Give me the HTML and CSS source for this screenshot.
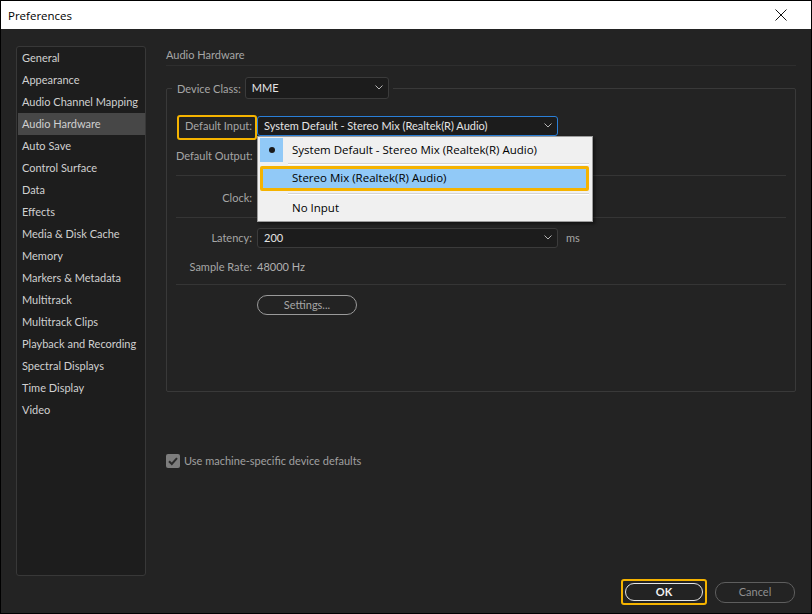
FILE: index.html
```html
<!DOCTYPE html>
<html>
<head>
<meta charset="utf-8">
<title>Preferences</title>
<link rel="stylesheet" href="styles.css">
</head>
<body>
<div class="window">
  <div class="titlebar">
    <span class="title">Preferences</span>
    <svg class="close" width="12" height="12" viewBox="0 0 12 12"><path d="M0.5 0.5 L11.5 11.5 M11.5 0.5 L0.5 11.5" stroke="#111" stroke-width="1" fill="none"/></svg>
  </div>
  <div class="body">
    <div class="content">
      <nav class="sidebar">
        <div class="nav-item">General</div>
        <div class="nav-item">Appearance</div>
        <div class="nav-item">Audio Channel Mapping</div>
        <div class="nav-item active">Audio Hardware</div>
        <div class="nav-item">Auto Save</div>
        <div class="nav-item">Control Surface</div>
        <div class="nav-item">Data</div>
        <div class="nav-item">Effects</div>
        <div class="nav-item">Media &amp; Disk Cache</div>
        <div class="nav-item">Memory</div>
        <div class="nav-item">Markers &amp; Metadata</div>
        <div class="nav-item">Multitrack</div>
        <div class="nav-item">Multitrack Clips</div>
        <div class="nav-item">Playback and Recording</div>
        <div class="nav-item">Spectral Displays</div>
        <div class="nav-item">Time Display</div>
        <div class="nav-item">Video</div>
      </nav>
      <main class="pane">
        <div class="pane-title">Audio Hardware</div>
        <div class="group">
          <div class="legend">
            <span class="legend-label">Device Class:</span>
            <div class="select select-class">
              <span class="select-text">MME</span>
              <svg class="chev" width="8" height="5" viewBox="0 0 8 5"><path d="M0.5 0.5 L4 4 L7.5 0.5" stroke="#b4b4b4" stroke-width="1" fill="none"/></svg>
            </div>
          </div>

          <div class="row row-input">
            <span class="label">Default Input:<span class="hl-label"></span></span>
            <div class="select select-wide focused">
              <span class="select-text">System Default - Stereo Mix (Realtek(R) Audio)</span>
              <svg class="chev" width="8" height="5" viewBox="0 0 8 5"><path d="M0.5 0.5 L4 4 L7.5 0.5" stroke="#b4b4b4" stroke-width="1" fill="none"/></svg>
            </div>
            <div class="popup">
              <div class="menu-item checked">
                <span class="check-col"><span class="dot"></span></span>
                <span class="menu-text">System Default - Stereo Mix (Realtek(R) Audio)</span>
              </div>
              <div class="menu-sep"></div>
              <div class="menu-item hover">
                <span class="menu-text">Stereo Mix (Realtek(R) Audio)</span>
              </div>
              <div class="menu-sep sep2"></div>
              <div class="menu-item">
                <span class="menu-text">No Input</span>
              </div>
            </div>
          </div>

          <div class="row row-output">
            <span class="label">Default Output:</span>
          </div>
          <div class="sep sep-a"></div>
          <div class="row row-clock">
            <span class="label">Clock:</span>
          </div>
          <div class="sep sep-b"></div>
          <div class="row row-latency">
            <span class="label">Latency:</span>
            <div class="select select-wide">
              <span class="select-text">200</span>
              <svg class="chev" width="8" height="5" viewBox="0 0 8 5"><path d="M0.5 0.5 L4 4 L7.5 0.5" stroke="#b4b4b4" stroke-width="1" fill="none"/></svg>
            </div>
            <span class="unit">ms</span>
          </div>
          <div class="row row-rate">
            <span class="label">Sample Rate:</span>
            <span class="value">48000 Hz</span>
          </div>
          <div class="sep sep-c"></div>
          <div class="row row-settings">
            <span class="label"></span>
            <button class="pill settings">Settings...</button>
          </div>
        </div>
        <div class="checkrow">
          <span class="checkbox">
            <svg width="14" height="14" viewBox="0 0 14 14"><path d="M3 7.2 L5.8 10 L11 4.2" stroke="#2b2b2b" stroke-width="2" fill="none"/></svg>
          </span>
          <span class="check-label">Use machine-specific device defaults</span>
        </div>
      </main>
    </div>
    <div class="footer">
      <span class="ok-wrap"><button class="pill ok">OK</button></span>
      <button class="pill cancel">Cancel</button>
    </div>
  </div>
</div>
</body>
</html>
```

FILE: styles.css
```css
* { box-sizing: border-box; }
html, body { margin: 0; padding: 0; background: #000; }

.window {
  width: 812px;
  height: 614px;
  border: 1px solid #000;
  display: flex;
  flex-direction: column;
  background: #232323;
  font-family: "Lato", "Open Sans", sans-serif;
  font-size: 11px;
}

.titlebar {
  height: 28px;
  background: #fff;
  display: flex;
  align-items: center;
  justify-content: space-between;
  padding: 0 24px 0 7px;
  flex: none;
}
.title {
  font-family: "Open Sans", "Noto Sans", sans-serif;
  font-size: 11.5px;
  color: #000;
}

.body {
  flex: 1;
  display: flex;
  flex-direction: column;
  padding: 17px 15px 0 15px;
}

.content {
  display: flex;
  height: 530px;
  flex: none;
}

.sidebar {
  width: 130px;
  height: 530px;
  background: #1d1d1d;
  border: 1px solid #383838;
  border-radius: 3px;
  padding: 0 0 0 1px;
  flex: none;
}
.nav-item {
  height: 22px;
  line-height: 22px;
  padding-left: 4px;
  color: #d0d0d0;
  white-space: nowrap;
}
.nav-item.active { background: #474747; }

.pane {
  flex: 1;
  margin-left: 20px;
  display: flex;
  flex-direction: column;
}
.pane-title {
  height: 20px;
  line-height: 18px;
  color: #a6a6a6;
  border-bottom: 1px solid #2e2e2e;
}

.group {
  margin-top: 22px;
  height: 304px;
  border: 1px solid #393939;
  border-radius: 2px;
  padding: 0 9px 0 9px;
  display: flex;
  flex-direction: column;
}

.legend {
  margin: -12px 0 0 -4px;
  align-self: flex-start;
  display: flex;
  align-items: center;
  background: #232323;
  padding: 0 4px 0 5px;
  height: 22px;
}
.legend-label { color: #a6a6a6; margin-right: 4px; }

.select {
  display: flex;
  align-items: center;
  justify-content: space-between;
  background: #1c1c1c;
  border: 1px solid #3b3b3b;
  border-radius: 3px;
  padding: 0 5px 1px 6px;
  color: #e4e4e4;
}
.select-class { width: 144px; height: 22px; }
.select-wide { width: 301px; height: 20px; }
.select.focused { border-color: #2a7fd8; }
.select-text { white-space: nowrap; }
.chev { flex: none; }

.row {
  display: flex;
  align-items: center;
  height: 20px;
  flex: none;
  padding-bottom: 1px;
}
.label {
  width: 76px;
  text-align: right;
  margin-right: 5px;
  color: #a6a6a6;
  white-space: nowrap;
  position: relative;
  flex: none;
}
.row-input { margin-top: 17px; position: relative; }
.row-output { margin-top: 10px; }
.row-clock { margin-top: 12px; }
.row-latency { margin-top: 10px; }
.row-rate { margin-top: 9px; }
.row-settings { margin-top: 10px; padding-bottom: 0; }

.sep { height: 1px; background: #353535; flex: none; }
.sep-a { margin-top: 9px; }
.sep-b { margin-top: 9px; }
.sep-c { margin-top: 7px; }

.unit { margin-left: 8px; color: #a6a6a6; }
.value { color: #b0b0b0; }

.hl-label {
  position: absolute;
  left: 1px;
  top: -4px;
  width: 80px;
  height: 25px;
  border: 2px solid #f5b300;
  border-radius: 3px;
}

.popup {
  position: absolute;
  left: 81px;
  top: 20px;
  width: 336px;
  height: 86px;
  background: #f0f0f0;
  border: 1px solid #9c9c9c;
  box-shadow: 2px 2px 3px rgba(0,0,0,0.45);
  padding: 1px 3px 0 2px;
  font-family: "Open Sans", "Noto Sans", sans-serif;
  font-size: 11.5px;
  color: #000;
  z-index: 5;
}
.menu-item {
  height: 24px;
  display: flex;
  align-items: center;
  padding-left: 32px;
  padding-bottom: 2px;
  white-space: nowrap;
  position: relative;
}
.menu-item.checked { padding-left: 0; padding-bottom: 0; }
.menu-item.checked .menu-text { padding-bottom: 2px; }
.check-col {
  width: 23px;
  height: 24px;
  background: #91c9f7;
  display: flex;
  align-items: center;
  justify-content: center;
  margin-right: 9px;
}
.dot {
  width: 6px;
  height: 6px;
  border-radius: 50%;
  background: #1a1a1a;
}
.menu-item.hover {
  height: 25px;
  margin-top: 1px;
  background: #91c9f7;
  border: 3px solid #f5b300;
  border-radius: 2px;
  padding-left: 29px;
}
.menu-sep {
  margin: 1px 0 0 28px;
  height: 2px;
  border-top: 1px solid #d5d5d5;
  border-bottom: 1px solid #fff;
}
.menu-sep.sep2 { margin-top: 2px; }
.menu-sep + .menu-item { margin-top: 1px; }

.pill {
  font-family: "Lato", "Open Sans", sans-serif;
  font-size: 11px;
  background: transparent;
  border-radius: 10px;
  padding: 0 0 1px 0;
  display: flex;
  align-items: center;
  justify-content: center;
}
.settings {
  width: 100px;
  height: 20px;
  border: 1px solid #9a9a9a;
  color: #a6a6a6;
}

.checkrow {
  margin-top: 62px;
  display: flex;
  align-items: center;
  height: 14px;
}
.checkbox {
  width: 14px;
  height: 14px;
  background: #7d7d7d;
  border-radius: 2px;
  display: block;
  margin-right: 4px;
}
.checkbox svg { display: block; }
.check-label { color: #a0a0a0; padding-bottom: 1px; }

.footer {
  display: flex;
  justify-content: flex-end;
  align-items: center;
  padding: 3px 1px 0 0;
  gap: 8px;
}
.ok-wrap {
  display: block;
  border: 2px solid #f5b300;
  border-radius: 3px;
  padding: 2px;
}
.ok {
  width: 78px;
  height: 18px;
  border: 1.5px solid #e6e6e6;
  color: #f2f2f2;
  font-weight: 700;
}
.cancel {
  width: 80px;
  height: 21px;
  border: 1px solid #5e5e5e;
  color: #8f8f8f;
}
```
